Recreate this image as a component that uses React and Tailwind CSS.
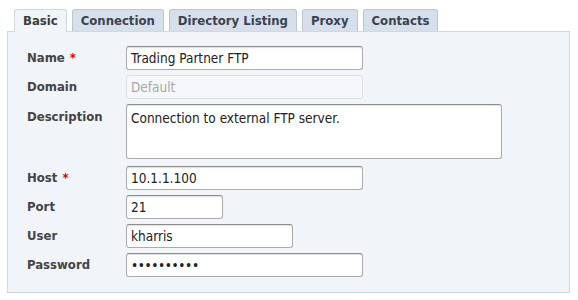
import React from "react";

const font = { fontFamily: '"DejaVu Sans Condensed", "DejaVu Sans", Verdana, sans-serif' };

function Tab({ label, active }) {
  return (
    <div
      className={
        "px-[8px] flex items-center text-[13px] font-bold border border-b-0 rounded-t-[3px] " +
        (active
          ? "bg-[#f1f4f9] border-[#d2d8e0] text-[#3c3c3c] -mb-px h-[23px] relative z-10"
          : "h-[22px] bg-[#d7dfea] border-[#bcc6d3] text-[#3a4252]")
      }
    >
      {label}
    </div>
  );
}

function Row({ label, required, children, top }) {
  return (
    <div className="flex">
      <div
        className={
          "w-[99px] shrink-0 text-[13px] font-bold text-[#444] " +
          (top ? "pt-[3px]" : "flex items-center h-[24px]")
        }
      >
        {label}
        {required && <span className="text-[#e00000] ml-[5px]">*</span>}
      </div>
      {children}
    </div>
  );
}

const inputCls =
  "h-[24px] rounded-[3px] border border-[#ababab] border-t-[#8c8c8c] bg-white px-[4px] flex items-center text-[13.5px] text-[#222] shadow-[inset_0_1px_1px_rgba(0,0,0,0.12)]";

export default function App() {
  return (
    <div className="w-[578px] h-[300px] bg-white pt-[9px] pl-[7px]" style={font}>
      <div className="flex gap-[5px] pl-[7px] items-end">
        <Tab label="Basic" active />
        <Tab label="Connection" />
        <Tab label="Directory Listing" />
        <Tab label="Proxy" />
        <Tab label="Contacts" />
      </div>
      <div className="w-[563px] h-[262px] bg-[#f1f4f9] border border-[#d2d8e0] pl-[19px] pt-[14px] flex flex-col gap-[5px]">
        <Row label="Name" required>
          <div className={inputCls + " w-[237px]"}>Trading Partner FTP</div>
        </Row>
        <Row label="Domain">
          <div className="h-[24px] w-[237px] rounded-[3px] border border-[#dcdfe4] bg-[#f5f7fa] px-[4px] flex items-center text-[13.5px] text-[#a8a8a8]">
            Default
          </div>
        </Row>
        <Row label="Description" top>
          <div className="h-[55px] w-[376px] rounded-[3px] border border-[#ababab] border-t-[#8c8c8c] bg-white px-[4px] pt-[3px] text-[13.5px] text-[#222] shadow-[inset_0_1px_1px_rgba(0,0,0,0.12)] mb-[2px]">
            Connection to external FTP server.
          </div>
        </Row>
        <Row label="Host" required>
          <div className={inputCls + " w-[237px]"}>10.1.1.100</div>
        </Row>
        <Row label="Port">
          <div className={inputCls + " w-[97px]"}>21</div>
        </Row>
        <Row label="User">
          <div className={inputCls + " w-[167px]"}>kharris</div>
        </Row>
        <Row label="Password">
          <div className={inputCls + " w-[237px] tracking-[-0.4px]"}>••••••••••</div>
        </Row>
      </div>
    </div>
  );
}
